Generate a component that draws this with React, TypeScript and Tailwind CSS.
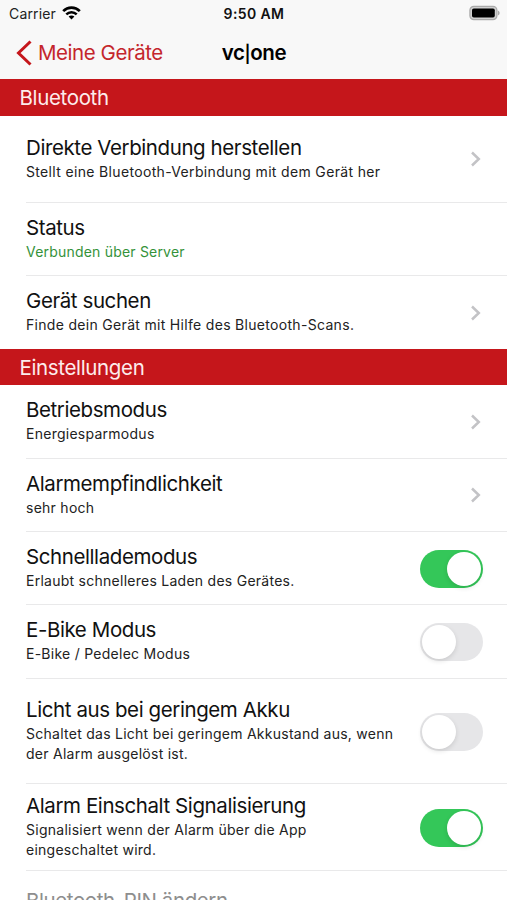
import { useState } from "react";

interface Row {
  title: string;
  subtitle?: string;
  kind: "link" | "info" | "toggle";
  on?: boolean;
  height: string;
  titleClass?: string;
  subtitleClass?: string;
}

const BLUETOOTH_ROWS: Row[] = [
  {
    title: "Direkte Verbindung herstellen",
    subtitle: "Stellt eine Bluetooth-Verbindung mit dem Gerät her",
    kind: "link",
    height: "h-[87px]",
    subtitleClass: "text-[#222] tracking-[0.34px]",
  },
  {
    title: "Status",
    subtitle: "Verbunden über Server",
    kind: "info",
    height: "h-[73px]",
    subtitleClass: "text-[#34923a] tracking-[0.2px]",
  },
  {
    title: "Gerät suchen",
    subtitle: "Finde dein Gerät mit Hilfe des Bluetooth-Scans.",
    kind: "link",
    height: "h-[73px]",
    subtitleClass: "text-[#222] tracking-[0.31px]",
  },
];

const SETTINGS_ROWS: Row[] = [
  { title: "Betriebsmodus", subtitle: "Energiesparmodus", kind: "link", height: "h-[74px]" },
  { title: "Alarmempfindlichkeit", subtitle: "sehr hoch", kind: "link", height: "h-[73px]" },
  {
    title: "Schnelllademodus",
    subtitle: "Erlaubt schnelleres Laden des Gerätes.",
    kind: "toggle",
    on: true,
    height: "h-[73px]",
  },
  { title: "E-Bike Modus", subtitle: "E-Bike / Pedelec Modus", kind: "toggle", height: "h-[74px]" },
  {
    title: "Licht aus bei geringem Akku",
    subtitle: "Schaltet das Licht bei geringem Akkustand aus, wenn\nder Alarm ausgelöst ist.",
    kind: "toggle",
    height: "h-[105px]",
  },
  {
    title: "Alarm Einschalt Signalisierung",
    subtitle: "Signalisiert wenn der Alarm über die App\neingeschaltet wird.",
    kind: "toggle",
    on: true,
    height: "h-[87px]",
  },
  { title: "Bluetooth-PIN ändern", kind: "info", height: "h-[62px]", titleClass: "text-[#8e8e8e]" },
];

function Toggle({ initial }: { initial: boolean }) {
  const [on, setOn] = useState(initial);

  return (
    <button
      role="switch"
      aria-checked={on}
      onClick={() => setOn(!on)}
      className={`mt-px flex h-[38px] w-[63px] shrink-0 items-center rounded-full p-[2px] ${
        on ? "justify-end bg-[#34c759]" : "justify-start bg-[#e6e6e8]"
      }`}
    >
      <span className="size-[34px] rounded-full bg-white shadow-[0_2px_5px_rgba(0,0,0,0.12)]" />
    </button>
  );
}

function Chevron() {
  return (
    <svg width="10" height="16" viewBox="0 0 10 16" fill="none" className="mr-[2px] shrink-0">
      <path d="M1 1.5L7.8 8L1 14.5" stroke="#c3c3c6" strokeWidth="2.5" />
    </svg>
  );
}

function SettingsRow({ row }: { row: Row }) {
  return (
    <div
      className={`ml-[26px] flex items-center justify-between border-b border-[#e9e9ea] pr-6 last:border-b-0 ${row.height}`}
    >
      <div className="pb-[2px]">
        <p
          className={`text-[20.5px] leading-[26px] tracking-[-0.41px] whitespace-nowrap ${row.titleClass ?? "text-[#111]"}`}
        >
          {row.title}
        </p>
        {row.subtitle && (
          <p
            className={`mt-px text-[14px] leading-[19.5px] whitespace-pre ${
              row.subtitleClass ?? "text-[#222] tracking-[0.26px]"
            }`}
          >
            {row.subtitle}
          </p>
        )}
      </div>
      {row.kind === "link" && <Chevron />}
      {row.kind === "toggle" && <Toggle initial={!!row.on} />}
    </div>
  );
}

function Section({ title, rows, height }: { title: string; rows: Row[]; height: string }) {
  return (
    <section>
      <h2
        className={`flex items-center bg-[#c5161b] pl-[19.5px] text-[20.5px] leading-[26px] tracking-[-0.35px] text-[#fdecec] ${height}`}
      >
        {title}
      </h2>
      <div>
        {rows.map((row) => (
          <SettingsRow key={row.title} row={row} />
        ))}
      </div>
    </section>
  );
}

function StatusBar() {
  return (
    <div className="grid h-7 grid-cols-3 items-center pr-[7px] pb-px pl-[9px] text-[14px] text-[#222]">
      <div className="flex items-center gap-[6px]">
        <span className="tracking-[0.15px]">Carrier</span>
        <svg width="19" height="14" viewBox="0 0 19 14" fill="none" stroke="#000" className="-mt-[2px]">
          <path d="M1.2 5.1C5.8 0.5 13.2 0.5 17.8 5.1" strokeWidth="2.7" />
          <path d="M4.3 8.3C7.2 5.4 11.8 5.4 14.7 8.3" strokeWidth="2.5" />
          <path d="M9.5 13.6L6.6 10.6C8.2 9.1 10.8 9.1 12.4 10.6Z" fill="#000" stroke="none" />
        </svg>
      </div>
      <span className="pr-px text-center font-semibold tracking-[0.4px] text-[#111]">9:50 AM</span>
      <svg width="31" height="16" viewBox="0 0 31 16" className="-mt-px justify-self-end">
        <rect x="0.9" y="1.3" width="27" height="13.4" rx="4" fill="#d0d0d0" stroke="#aaa" strokeWidth="1.2" />
        <rect x="3" y="3.4" width="22.8" height="9.2" rx="1.8" fill="#000" />
        <path d="M28.9 5.5C31.2 6.4 31.2 9.6 28.9 10.5Z" fill="#aaa" />
      </svg>
    </div>
  );
}

export default function App() {
  return (
    <div className="flex h-[900px] w-[507px] flex-col overflow-hidden bg-white font-['Inter','Liberation_Sans',sans-serif]">
      <header className="h-[79px] shrink-0 bg-[#f8f8f8]">
        <StatusBar />
        <div className="grid h-[49px] grid-cols-[1fr_auto_1fr] items-center pl-4">
          <button className="flex items-center gap-[6px] text-[20.5px] tracking-[-0.45px] text-[#c4262c]">
            <svg width="16" height="26" viewBox="0 0 16 26" fill="none">
              <path d="M14.5 1.5L2.5 13L14.5 24.5" stroke="#c5161b" strokeWidth="3" />
            </svg>
            <span className="pt-px">Meine Geräte</span>
          </button>
          <h1 className="pt-px pr-[15px] text-[20.5px] font-semibold tracking-[-0.4px] text-black">
            vc<span className="text-[17px]">|</span>one
          </h1>
        </div>
      </header>
      <main>
        <Section title="Bluetooth" rows={BLUETOOTH_ROWS} height="h-[37px]" />
        <Section title="Einstellungen" rows={SETTINGS_ROWS} height="h-[36px] pt-px" />
      </main>
    </div>
  );
}
